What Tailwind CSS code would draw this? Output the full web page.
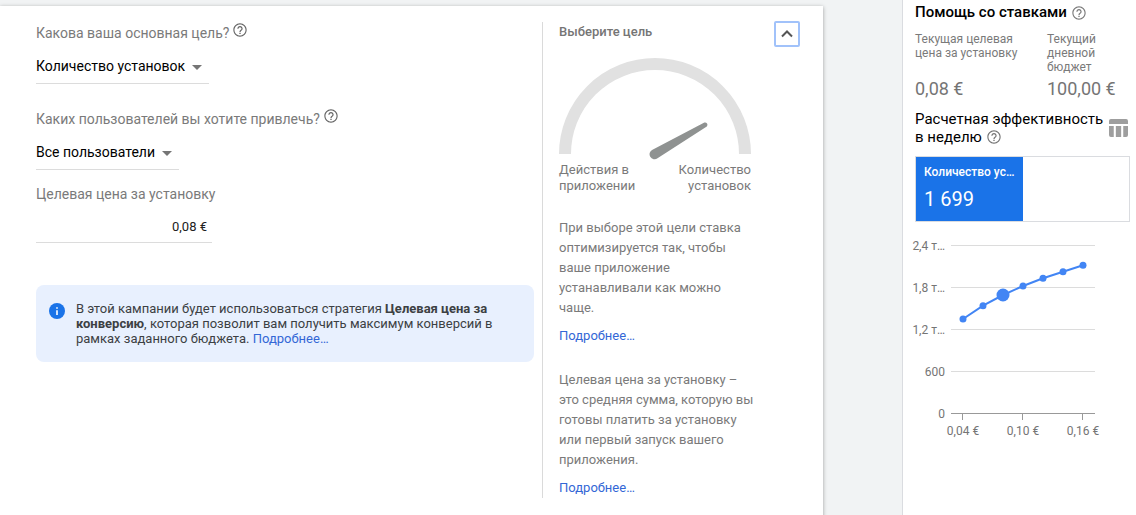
<!DOCTYPE html>
<html lang="ru">

<head>
    <meta charset="UTF-8" />
    <meta name="viewport" content="width=device-width, initial-scale=1.0" />
    <title>Помощь со ставками</title>
    <script src="https://cdn.jsdelivr.net/npm/@tailwindcss/browser@4"></script>
</head>

<body class="flex h-[515px] overflow-hidden bg-[#f1f3f4] font-['Roboto',sans-serif] text-[#7a7a7a]">
    <!-- icône d'aide réutilisée -->
    <svg class="hidden">
        <symbol id="help" viewBox="0 0 24 24">
            <path
                d="M11 18h2v-2h-2v2zm1-16C6.480 2 2 6.480 2 12s4.480 10 10 10 10-4.480 10-10S17.520 2 12 2zm0 18.300c-4.600 0-8.300-3.700-8.300-8.300S7.400 3.700 12 3.700s8.300 3.700 8.300 8.300-3.700 8.300-8.300 8.300zm0-14.300c-2.210 0-4 1.790-4 4h1.800c0-1.100.9-2.200 2.200-2.200s2.200 1.100 2.200 2.200c0 2-3.100 1.750-3.100 5h1.800c0-2.250 3.100-2.500 3.100-5 0-2.210-1.790-4-4-4z" />
        </symbol>
    </svg>

    <main class="w-[902px] shrink-0 pt-1.5">
        <div class="flex h-[520px] w-[823px] bg-white pt-4 shadow-[0_1px_4px_rgba(0,0,0,0.35)]">
            <section class="w-[542px] pl-9">
                <div class="flex h-[22px] gap-[3px] text-sm leading-[22px]">
                    <span>Какова ваша основная цель?</span>
                    <svg class="size-4 fill-[#666]" viewBox="0 0 24 24"><use href="#help" /></svg>
                </div>
                <div class="mt-2.5 flex h-[30px] w-[173px] items-center justify-between border-b border-[#dcdcdc] pr-[7px] text-sm text-black">
                    <span class="pb-1.5">Количество установок</span>
                    <span class="-mt-0.5 border-x-[5px] border-t-[5px] border-x-transparent border-t-[#757575]"></span>
                </div>
                <div class="mt-6 flex h-[22px] gap-[3px] text-sm leading-[22px]">
                    <span>Каких пользователей вы хотите привлечь?</span>
                    <svg class="size-4 fill-[#666]" viewBox="0 0 24 24"><use href="#help" /></svg>
                </div>
                <div class="mt-2.5 flex h-[30px] w-[143px] items-center justify-between border-b border-[#dcdcdc] pr-[7px] text-sm text-black">
                    <span class="pb-1.5">Все пользователи</span>
                    <span class="-mt-0.5 border-x-[5px] border-t-[5px] border-x-transparent border-t-[#757575]"></span>
                </div>
                <div class="mt-[13px] h-[22px] text-sm leading-[22px]">Целевая цена за установку</div>
                <div class="mt-[11px] h-[27px] w-44 border-b border-[#dcdcdc] pr-[5px] text-right text-[13px] leading-[22px] text-[#212121]">0,08 €</div>

                <div class="mt-[42px] flex h-[77px] w-[498px] rounded-lg bg-[#e8f0fe] pt-4 pl-[13px] text-[13px] leading-[15px] text-[#3c4043]">
                    <svg class="mt-0.5 mr-[11px] size-4 shrink-0" viewBox="0 0 16 16">
                        <circle cx="8" cy="8" r="8" fill="#1a73e8" />
                        <path d="M7.200 4.200h1.600v1.600H7.200zM7.200 7.200h1.600v4.800H7.200z" fill="#fff" />
                    </svg>
                    <p>
                        В этой кампании будет использоваться стратегия <b>Целевая цена за<br />конверсию</b>, которая позволит вам получить максимум конверсий в<br />рамках заданного бюджета. <a class="text-[#3367d6]">Подробнее…</a>
                    </p>
                </div>
            </section>

            <section class="h-[476px] w-[281px] border-l border-[#dadada] pl-4 text-[13px]">
                <div class="flex h-[36px] justify-between pr-[23px]">
                    <h2 class="font-medium leading-5 text-[#757575]">Выберите цель</h2>
                    <button class="-mt-px flex size-[26px] items-center justify-center rounded-[2px] border-2 border-[#a1c2fa]">
                        <svg class="size-3" viewBox="0 0 12 12" fill="none" stroke="#555" stroke-width="2">
                            <path d="M1 8.500L6 3.500L11 8.500" />
                        </svg>
                    </button>
                </div>
                <svg class="block h-[102px] w-48" viewBox="0 0 192 102">
                    <path d="M6 96A90 90 0 0 1 186 96" fill="none" stroke="#e1e1e1" stroke-width="12" />
                    <path d="M93.500 91.700L145.400 64.500A2.400 2.400 0 0 1 147.800 68.400L98.500 100.300A5 5 0 1 1 93.500 91.700Z" fill="#8f9291" />
                </svg>
                <div class="mt-[2px] flex w-48 justify-between leading-4">
                    <span>Действия в<br />приложении</span>
                    <span class="text-right">Количество<br />установок</span>
                </div>
                <p class="mt-6 leading-5">
                    При выборе этой цели ставка<br />оптимизируется так, чтобы<br />ваше приложение<br />устанавливали как можно<br />чаще.
                </p>
                <a class="mt-2 block leading-5 text-[#3367d6]">Подробнее…</a>
                <p class="mt-6 leading-5">
                    Целевая цена за установку –<br />это средняя сумма, которую вы<br />готовы платить за установку<br />или первый запуск вашего<br />приложения.
                </p>
                <a class="mt-2 block leading-5 text-[#3367d6]">Подробнее…</a>
            </section>
        </div>
    </main>

    <aside class="w-[234px] shrink-0 border-l border-[#dadce0] bg-white pl-3">
        <div class="flex h-8 items-center gap-1 pb-[7px]">
            <h2 class="text-[15px] font-medium text-black">Помощь со ставками</h2>
            <svg class="size-4 fill-current" viewBox="0 0 24 24"><use href="#help" /></svg>
        </div>
        <div class="flex text-xs leading-[14px]">
            <div class="w-[132px]">
                <div class="h-[45px]">Текущая целевая<br />цена за установку</div>
                <div class="text-lg leading-6 text-[#757575]">0,08 €</div>
            </div>
            <div>
                <div class="h-[45px]">Текущий<br />дневной<br />бюджет</div>
                <div class="text-lg leading-6 text-[#757575]">100,00 €</div>
            </div>
        </div>
        <div class="mt-[9px] flex h-[46px] text-[15px] leading-[18px] text-black">
            <div class="w-[194px] shrink-0 whitespace-nowrap">
                Расчетная эффективность
                <div class="flex items-center gap-1">
                    <span>в неделю</span>
                    <svg class="size-4 fill-[#757575]" viewBox="0 0 24 24"><use href="#help" /></svg>
                </div>
            </div>
            <svg class="mt-[9px] h-[18px] w-[19px]" viewBox="0 0 20 18" preserveAspectRatio="none" fill="#9e9e9e">
                <path d="M2 0H18A2 2 0 0 1 20 2V5H0V2A2 2 0 0 1 2 0ZM0 7H5V18H2A2 2 0 0 1 0 16ZM7.200 7H12.800V18H7.200ZM15 7H20V16A2 2 0 0 1 18 18H15Z" />
            </svg>
        </div>
        <div class="flex h-[66px] w-[215px] border border-[#dadce0]">
            <div class="w-[107px] bg-[#1a73e8] pl-2 pt-2 text-white">
                <div class="text-xs font-medium leading-[14px]">Количество ус…</div>
                <div class="mt-2 text-xl leading-6">1 699</div>
            </div>
        </div>

        <!-- график: установки по цене -->
        <svg class="-ml-2.5 mt-3 block h-[210px] w-[225px]" viewBox="-10 0 225 210">
            <path d="M36 11.500H180M36 53.500H180M36 95.500H180M36 137.500H180" stroke="#dcdcdc" />
            <path d="M36 179.500H180M47.500 180V186M107.500 180V186M167.500 180V186" stroke="#999" />
            <g fill="#757575" font-size="12" text-anchor="end">
                <text x="30" y="16">2,4 т…</text>
                <text x="30" y="58">1,8 т…</text>
                <text x="30" y="100">1,2 т…</text>
                <text x="30" y="142">600</text>
                <text x="30" y="184">0</text>
            </g>
            <g fill="#757575" font-size="12" text-anchor="middle">
                <text x="48" y="201">0,04 €</text>
                <text x="108" y="201">0,10 €</text>
                <text x="168" y="201">0,16 €</text>
            </g>
            <polyline points="48,85 68,71.700 88,61 108,52 128,44.300 148,37.700 168,31.300" fill="none" stroke="#4285f4" stroke-width="2" />
            <g fill="#4285f4">
                <circle cx="48" cy="85" r="3.500" />
                <circle cx="68" cy="71.700" r="3.500" />
                <circle cx="88" cy="61" r="6.500" />
                <circle cx="108" cy="52" r="3.500" />
                <circle cx="128" cy="44.300" r="3.500" />
                <circle cx="148" cy="37.700" r="3.500" />
                <circle cx="168" cy="31.300" r="3.500" />
            </g>
        </svg>
    </aside>
</body>

</html>
